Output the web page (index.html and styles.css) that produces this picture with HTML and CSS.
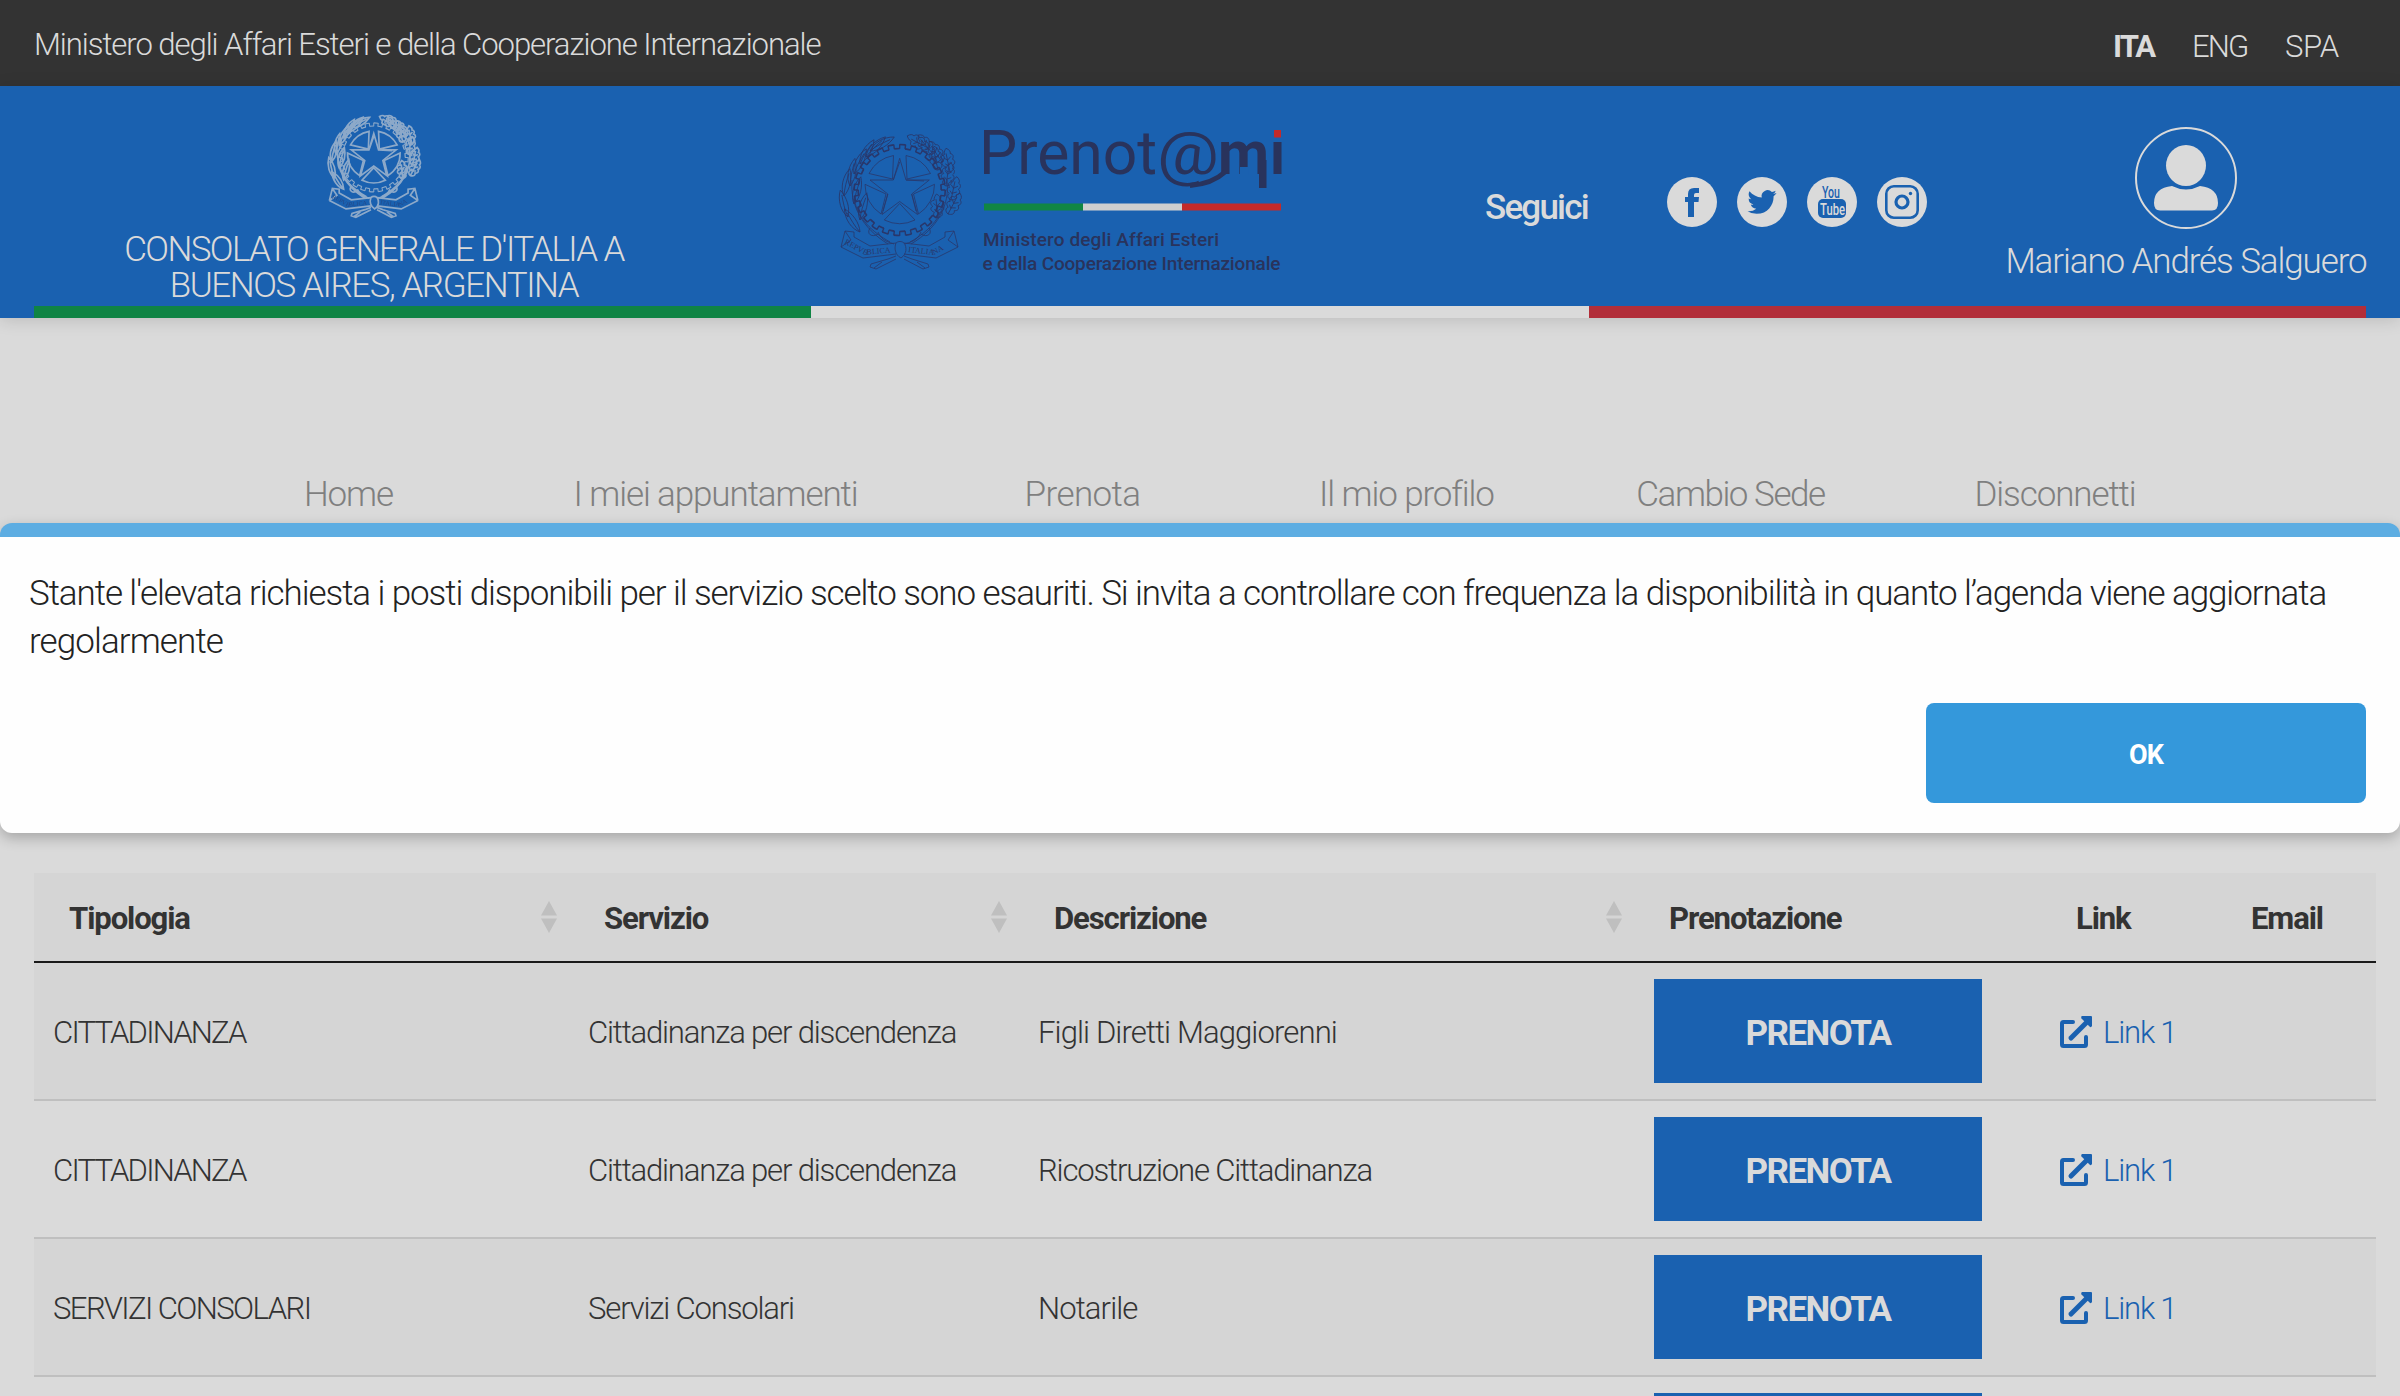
FILE: index.html
```html
<!DOCTYPE html>
<html lang="it">
<head>
<meta charset="utf-8">
<title>Prenot@mi</title>
<link rel="stylesheet" href="styles.css">
</head>
<body>
<svg class="defs" aria-hidden="true">
  <defs>
    <path id="leaf" d="M0 0C-5-7-5-19 1-28C5-19 5-8 0 0ZM0 0C-1-8 0-16 1-23"/>
    <path id="oak" d="M0 0C-4-1-5-4-3-6C-7-8-7-11-4-12C-7-15-6-18-2-18C-2-21 0-23 1-24C4-22 5-20 4-18C7-17 7-14 5-12C8-10 7-7 4-6C6-3 4-1 0 0ZM0 0L0-19M0-6L-3-9M0-7L4-9M0-12L-3-15M0-12L4-15"/>
    <symbol id="emblem" viewBox="0 0 140 160">
      <path d="M69.7 38.3L76 60H99.3L81.7 74L87.5 94.5L69.7 81.5L52 94.5L57.8 74L40 60H63.3ZM63.3 60L69.7 42M76 60L94 61M81.7 74L86 91M57.8 74L53 91"/>
      <path d="M63.5 35.5L62.5 59L39 53.5A35 35 0 0 1 63.5 35.5ZM76 35.5L77 59L100.5 53.5A35 35 0 0 0 76 35.5ZM35 64.3L56 74L51 94A35 35 0 0 1 35 64.3ZM104.5 64.3L83.5 74L88.5 94A35 35 0 0 0 104.5 64.3ZM54.3 100L69.7 83.5L85 100A35 35 0 0 1 54.3 100Z"/>
      <g class="gear">
        <circle cx="69.7" cy="70" r="45.5" pathLength="48" stroke-dasharray="1 1"/>
        <circle cx="69.7" cy="70" r="41.5" pathLength="48" stroke-dasharray="1 1" stroke-dashoffset="1"/>
        <circle class="teeth" cx="69.7" cy="70" r="43.5" pathLength="48" stroke-dasharray=".24 .76" stroke-dashoffset=".12"/>
      </g>
      <g>
        <use href="#leaf" transform="translate(40 31) rotate(58)"/>
        <use href="#leaf" transform="translate(36 37) rotate(42)"/>
        <use href="#leaf" transform="translate(30 44) rotate(28)"/>
        <use href="#leaf" transform="translate(24 54) rotate(24)"/>
        <use href="#leaf" transform="translate(20 66) rotate(8)"/>
        <use href="#leaf" transform="translate(14 76) rotate(10)"/>
        <use href="#leaf" transform="translate(24 84) rotate(12)"/>
        <use href="#leaf" transform="translate(18 97) rotate(-18)"/>
        <use href="#leaf" transform="translate(30 100) rotate(12)"/>
        <use href="#leaf" transform="translate(30 112) rotate(-36)"/>
        <path d="M22 60C20 85 32 108 58 124M25 82C28 98 42 112 60 122"/>
      </g>
      <g>
        <use href="#oak" transform="translate(98 28) rotate(-62)"/>
        <use href="#oak" transform="translate(103 34) rotate(-40)"/>
        <use href="#oak" transform="translate(112 42) rotate(-34)"/>
        <use href="#oak" transform="translate(108 50) rotate(-12)"/>
        <use href="#oak" transform="translate(120 52) rotate(-12)"/>
        <use href="#oak" transform="translate(116 66) rotate(8)"/>
        <use href="#oak" transform="translate(121 80) rotate(12)"/>
        <use href="#oak" transform="translate(118 94) rotate(28)"/>
        <use href="#oak" transform="translate(108 98) rotate(-6)"/>
        <path d="M117 60C120 85 108 108 81 124M114 82C111 98 98 112 80 122"/>
      </g>
      <path d="M40 108C36 114 42 118 48 114M99 108C103 114 97 118 91 114M48 112C52 122 60 122 64 124M91 112C87 122 79 122 75 124"/>
      <path d="M11 127L15 111L24 112V117L40 126L66 123M11 127L33 138L66 134M128 127L124 111L115 112V117L99 126L74 123M128 127L106 138L74 134M15 111L21 120L11 127M124 111L118 120L128 127"/>
      <path d="M66 123C64 128 65 135 71 138C77 134 77 127 74 123C72 121 68 121 66 123ZM66 136L58 139L41 144L40 147L46 149L66 139M74 136L82 139L98 144L99 147L93 149L74 139M52 142L44 148M87 142L95 148"/>
      <path id="ribbonLeft" class="guide" d="M14 123.500L35 135L66 132"/>
      <path id="ribbonRight" class="guide" d="M78 132L104 135L127 122.500"/>
      <text class="motto"><textPath href="#ribbonLeft">REPVBBLICA</textPath></text>
      <text class="motto"><textPath href="#ribbonRight">ITALIANA</textPath></text>
    </symbol>
    <symbol id="external" viewBox="0 0 32 32">
      <path d="M13 6H3.500Q2 6 2 7.500V28.500Q2 30 3.500 30H24.500Q26 30 26 28.500V21" fill="none" stroke="currentColor" stroke-width="4" stroke-linecap="round"/>
      <path d="M11 22L27 6" fill="none" stroke="currentColor" stroke-width="5" stroke-linecap="round"/>
      <path d="M22 0H31Q32 0 32 1V10Q31 12 29.500 10.500L21.500 2.500Q20.500 .5 22 0Z" fill="currentColor"/>
    </symbol>
  </defs>
</svg>

<div class="topbar">
  <span>Ministero degli Affari Esteri e della Cooperazione Internazionale</span>
  <nav class="langs"><a class="active">ITA</a><a class="eng">ENG</a><a class="spa">SPA</a></nav>
</div>

<header class="header">
  <div class="brand">
    <div class="consulate">
      <svg class="emblem-light"><use href="#emblem"/></svg>
      <div class="office">CONSOLATO GENERALE D'ITALIA A<br><span class="city">BUENOS AIRES, ARGENTINA</span></div>
    </div>
    <svg class="logo" viewBox="830 100 470 180">
      <use class="emblem-dark" href="#emblem" x="830" y="120" width="140" height="160"/>
      <text class="word" x="979" y="174" textLength="178" lengthAdjust="spacingAndGlyphs">Prenot</text>
      <text class="at" x="1157" y="174" textLength="62" lengthAdjust="spacingAndGlyphs">@</text>
      <text class="mi" x="1218" y="174" textLength="51" lengthAdjust="spacingAndGlyphs">m</text>
      <text class="mi" x="1270" y="174" textLength="15" lengthAdjust="spacingAndGlyphs">i</text>
      <path d="M1190 185.500Q1212 184 1225 172" fill="none" stroke="#29335c" stroke-width="5"/>
      <rect x="1259" y="160" width="7.500" height="28" fill="#29335c"/>
      <rect x="1240" y="167" width="8.500" height="8" fill="#1a61b0"/>
      <rect x="1271" y="125" width="13" height="14" fill="#1a61b0"/>
      <rect x="1274" y="130" width="7" height="7.500" fill="#c32a2a"/>
      <rect x="984" y="203.500" width="99" height="7" fill="#118643"/>
      <rect x="1083" y="203.500" width="99" height="7" fill="#cfcfcf"/>
      <rect x="1182" y="203.500" width="99" height="7" fill="#c32a2a"/>
      <text class="sub" x="983" y="246" textLength="236">Ministero degli Affari Esteri</text>
      <text class="sub" x="982.500" y="270" textLength="298">e della Cooperazione Internazionale</text>
    </svg>
    <span class="follow">Seguici</span>
    <div class="social">
      <svg viewBox="0 0 50 50"><circle cx="25" cy="25" r="25"/><path class="cut" d="M21 40V25H18V20H21V17Q21 11 27 11H32V16H29Q27 16 27 18V20H32L31.500 25H27V40Z"/></svg>
      <svg viewBox="0 0 50 50"><circle cx="25" cy="25" r="25"/><path class="cut" transform="translate(10.500 10.500) scale(1.21)" d="M23.953 4.57a10 10 0 01-2.825.775 4.958 4.958 0 002.163-2.723c-.951.555-2.005.959-3.127 1.184a4.92 4.92 0 00-8.384 4.482C7.69 8.095 4.067 6.130 1.640 3.162a4.822 4.822 0 00-.666 2.475c0 1.710.870 3.213 2.188 4.096a4.904 4.904 0 01-2.228-.616v.060a4.923 4.923 0 003.946 4.827 4.996 4.996 0 01-2.212.085 4.936 4.936 0 004.604 3.417 9.867 9.867 0 01-6.102 2.105c-.390 0-.779-.023-1.170-.067a13.995 13.995 0 007.557 2.209c9.053 0 13.998-7.496 13.998-13.985 0-.210 0-.420-.015-.630A9.935 9.935 0 0024 4.590z"/></svg>
      <svg viewBox="0 0 50 50"><circle cx="25" cy="25" r="25"/><rect class="cut" x="11" y="22" width="28" height="19" rx="5"/><text class="you" x="15" y="20.500" textLength="18" lengthAdjust="spacingAndGlyphs">You</text><text class="tube" x="13" y="37.500" textLength="25" lengthAdjust="spacingAndGlyphs">Tube</text></svg>
      <svg viewBox="0 0 50 50"><circle cx="25" cy="25" r="25"/><rect class="line" x="9.300" y="9.300" width="31.400" height="31.400" rx="7.500"/><circle class="line thick" cx="25" cy="25" r="6"/><circle class="cut" cx="33.500" cy="16.500" r="1.700"/></svg>
    </div>
    <div class="user">
      <svg class="avatar" viewBox="0 0 104 104"><circle cx="52" cy="52" r="50" fill="none" stroke="#dadada" stroke-width="2"/><ellipse cx="52" cy="39.500" rx="20" ry="20.500"/><path d="M38 60Q20 62 20 77Q20 84.500 26 84.500H78Q84 84.500 84 77Q84 62 66 60Q52 67 38 60Z"/></svg>
      <span>Mariano Andrés Salguero</span>
    </div>
  </div>
  <div class="flag"><i class="green"></i><i class="white"></i><i class="red"></i></div>
</header>

<nav class="menu">
  <a>Home</a><a>I miei appuntamenti</a><a class="loose">Prenota</a><a>Il mio profilo</a><a class="tight">Cambio Sede</a><a>Disconnetti</a>
</nav>

<main class="services">
  <div class="row head">
    <div>Tipologia<svg class="sort" viewBox="0 0 16 32"><path d="M8 0L16 14.500H0ZM8 32L0 17.500H16Z"/></svg></div>
    <div>Servizio<svg class="sort" viewBox="0 0 16 32"><path d="M8 0L16 14.500H0ZM8 32L0 17.500H16Z"/></svg></div>
    <div>Descrizione<svg class="sort" viewBox="0 0 16 32"><path d="M8 0L16 14.500H0ZM8 32L0 17.500H16Z"/></svg></div>
    <div>Prenotazione</div>
    <div>Link</div>
    <div>Email</div>
  </div>
  <div class="row odd">
    <div class="type">CITTADINANZA</div>
    <div>Cittadinanza per discendenza</div>
    <div class="wide">Figli Diretti Maggiorenni</div>
    <div><button class="book">PRENOTA</button></div>
    <div><a class="link"><svg><use href="#external"/></svg>Link 1</a></div>
    <div></div>
  </div>
  <div class="row">
    <div class="type">CITTADINANZA</div>
    <div>Cittadinanza per discendenza</div>
    <div>Ricostruzione Cittadinanza</div>
    <div><button class="book">PRENOTA</button></div>
    <div><a class="link"><svg><use href="#external"/></svg>Link 1</a></div>
    <div></div>
  </div>
  <div class="row odd">
    <div class="type long">SERVIZI CONSOLARI</div>
    <div>Servizi Consolari</div>
    <div class="wide">Notarile</div>
    <div><button class="book">PRENOTA</button></div>
    <div><a class="link"><svg><use href="#external"/></svg>Link 1</a></div>
    <div></div>
  </div>
  <div class="row last">
    <div></div><div></div><div></div>
    <div><div class="book"></div></div>
    <div></div><div></div>
  </div>
</main>

<div class="dialog" role="alertdialog">
  <p class="message">Stante l'elevata richiesta i posti disponibili per il servizio scelto sono esauriti. Si invita a controllare con frequenza la disponibilità in quanto l’agenda viene aggiornata <span class="loose">regolarmente</span></p>
  <div class="actions"><button class="ok">OK</button></div>
</div>
</body>
</html>
```
FILE: styles.css
```css
* { box-sizing: border-box; }
body {
  margin: 0;
  width: 2400px;
  height: 1396px;
  overflow: hidden;
  position: relative;
  background: #dadada;
  color: #333;
  font-family: Roboto, "Open Sans", sans-serif;
  font-weight: 300;
  letter-spacing: -1.1px;
}
.defs { position: absolute; width: 0; height: 0; }
button { font: inherit; color: inherit; border: 0; padding: 0; }

/* top bar */
.topbar {
  height: 86px;
  padding: 3px 63px 0 34px;
  display: flex;
  align-items: center;
  justify-content: space-between;
  background: #333;
  color: #dadada;
  font-size: 31.1px;
  letter-spacing: -1.07px;
}
.langs { display: grid; grid-template-columns: 79px 93px 52px; padding-top: 4px; }
.active { font-weight: 700; letter-spacing: -2px; }
.eng { letter-spacing: -1.9px; }
.spa { letter-spacing: -.4px; }

/* header */
.header { background: #1a61b0; color: #dadada; box-shadow: 0 2px 16px rgba(0,0,0,.14); }
.brand { height: 220px; padding: 0 34px; display: flex; align-items: flex-start; }
.consulate { width: 680px; text-align: center; padding-top: 18px; }
.emblem-light {
  display: block;
  width: 106px;
  height: 122px;
  margin: 0 auto;
  fill: none;
  stroke: #dadada;
  stroke-width: 2.2;
  opacity: .6;
  filter: blur(.6px);
}
.office { margin-top: 6px; font-size: 35px; line-height: 36px; letter-spacing: -1.6px; }
.city { letter-spacing: -1.42px; }
.logo { flex: none; width: 470px; height: 180px; margin: 14px 0 0 116px; }
.emblem-dark { fill: none; stroke: #29376b; stroke-width: .8; }
.gear { stroke-width: 1.6; }
.teeth { stroke-width: 4.5; }
.guide { stroke: none; }
.motto { font: 8px "Liberation Serif", serif; letter-spacing: 0; fill: #29376b; stroke: none; }
.logo text { letter-spacing: 0; }
.word { font-size: 60.5px; font-weight: 400; fill: #29335c; }
.at { font-size: 60px; font-weight: 400; fill: #29335c; }
.mi { font-size: 61px; font-weight: 700; fill: #29335c; }
.sub { font-size: 19px; font-weight: 500; fill: #29335c; }
.follow { margin: 100px 0 0 185px; width: 103px; font-size: 35px; line-height: 44px; font-weight: 500; letter-spacing: -1.8px; }
.social { display: flex; gap: 20px; margin: 91px 0 0 79px; }
.social svg { width: 50px; height: 50px; fill: #dadada; }
.social text { letter-spacing: 0; }
.social .cut { fill: #1a61b0; }
.social .line { fill: none; stroke: #1a61b0; stroke-width: 2.6; }
.social .thick { stroke-width: 3.2; }
.social .you { font-size: 17px; font-weight: 500; fill: #1a61b0; }
.tube { font-size: 17px; font-weight: 500; fill: #dadada; }
.user {
  width: 360px;
  margin-left: auto;
  padding-top: 40px;
  display: flex;
  flex-direction: column;
  align-items: center;
  font-size: 35px;
  line-height: 42px;
  white-space: nowrap;
}
.avatar { width: 104px; height: 104px; fill: #dadada; margin-bottom: 11px; }
.flag { display: flex; height: 12px; padding: 0 34px; }
.flag i { flex: 1; }
.green { background: #0f8444; }
.white { background: #dadada; }
.red { background: #b22e39; }

/* menu */
.menu {
  display: grid;
  grid-template-columns: 367px 367px 367px 281px 367px 282px;
  margin: 153px 0 0 165px;
  text-align: center;
  font-size: 35px;
  line-height: 48px;
  color: #7f7f7f;
}
.menu .loose { letter-spacing: -.6px; }
.menu .tight { letter-spacing: -1.45px; }

/* services table */
.services { margin: 354px 24px 0 34px; font-size: 31.1px; }
.row {
  display: grid;
  grid-template-columns: 535px 450px 615px 407px 175px 160px;
  align-items: center;
  height: 138px;
  border-bottom: 2px solid #bfbfbf;
}
.row > div { padding: 3px 20px 0 19px; letter-spacing: -1.18px; }
.row > div:has(.book) { padding: 0 20px; }
.row > .type { letter-spacing: -1.81px; }
.row > .long { letter-spacing: -1.6px; }
.row > .wide { letter-spacing: -.9px; }
.row.last { height: 33px; align-items: start; border: 0; overflow: hidden; }
.row.last > div { padding-top: 16px; }
.odd { background: #d5d5d5; }
.row.head { height: 90px; background: #d5d5d5; border-color: #1a1a1a; font-weight: 700; }
.row.head > div { padding: 3px 12px 0 35px; display: flex; align-items: center; justify-content: space-between; letter-spacing: -1.12px; }
.sort { width: 16px; height: 32px; fill: #bfbfbf; margin-top: -3px; }
.book {
  display: flex;
  align-items: center;
  justify-content: center;
  width: 328px;
  height: 104px;
  padding-top: 4px;
  background: #1a61b0;
  color: #dadada;
  font-size: 35px;
  font-weight: 700;
  letter-spacing: -1.55px;
}
.link { display: flex; align-items: center; gap: 11px; color: #1a61b0; letter-spacing: -1.2px; }
.link svg { width: 32px; height: 32px; margin-top: -2px; }

/* dialog */
.dialog {
  position: absolute;
  left: 0;
  top: 523px;
  width: 2400px;
  height: 310px;
  border-top: 14px solid #5dade2;
  border-radius: 12px;
  background: #fefefe;
  box-shadow: 0 5px 14px rgba(0,0,0,.24);
  padding: 33px 34px 0 29px;
}
.message { margin: 0; font-size: 35px; line-height: 48px; letter-spacing: -1.08px; color: #222; }
.message .loose { letter-spacing: -.9px; }
.actions { display: flex; justify-content: flex-end; margin-top: 37px; }
.ok { width: 440px; height: 100px; border-radius: 8px; background: #3498db; color: #fff; font-size: 27px; font-weight: 700; letter-spacing: -1px; padding-top: 4px; }
```
